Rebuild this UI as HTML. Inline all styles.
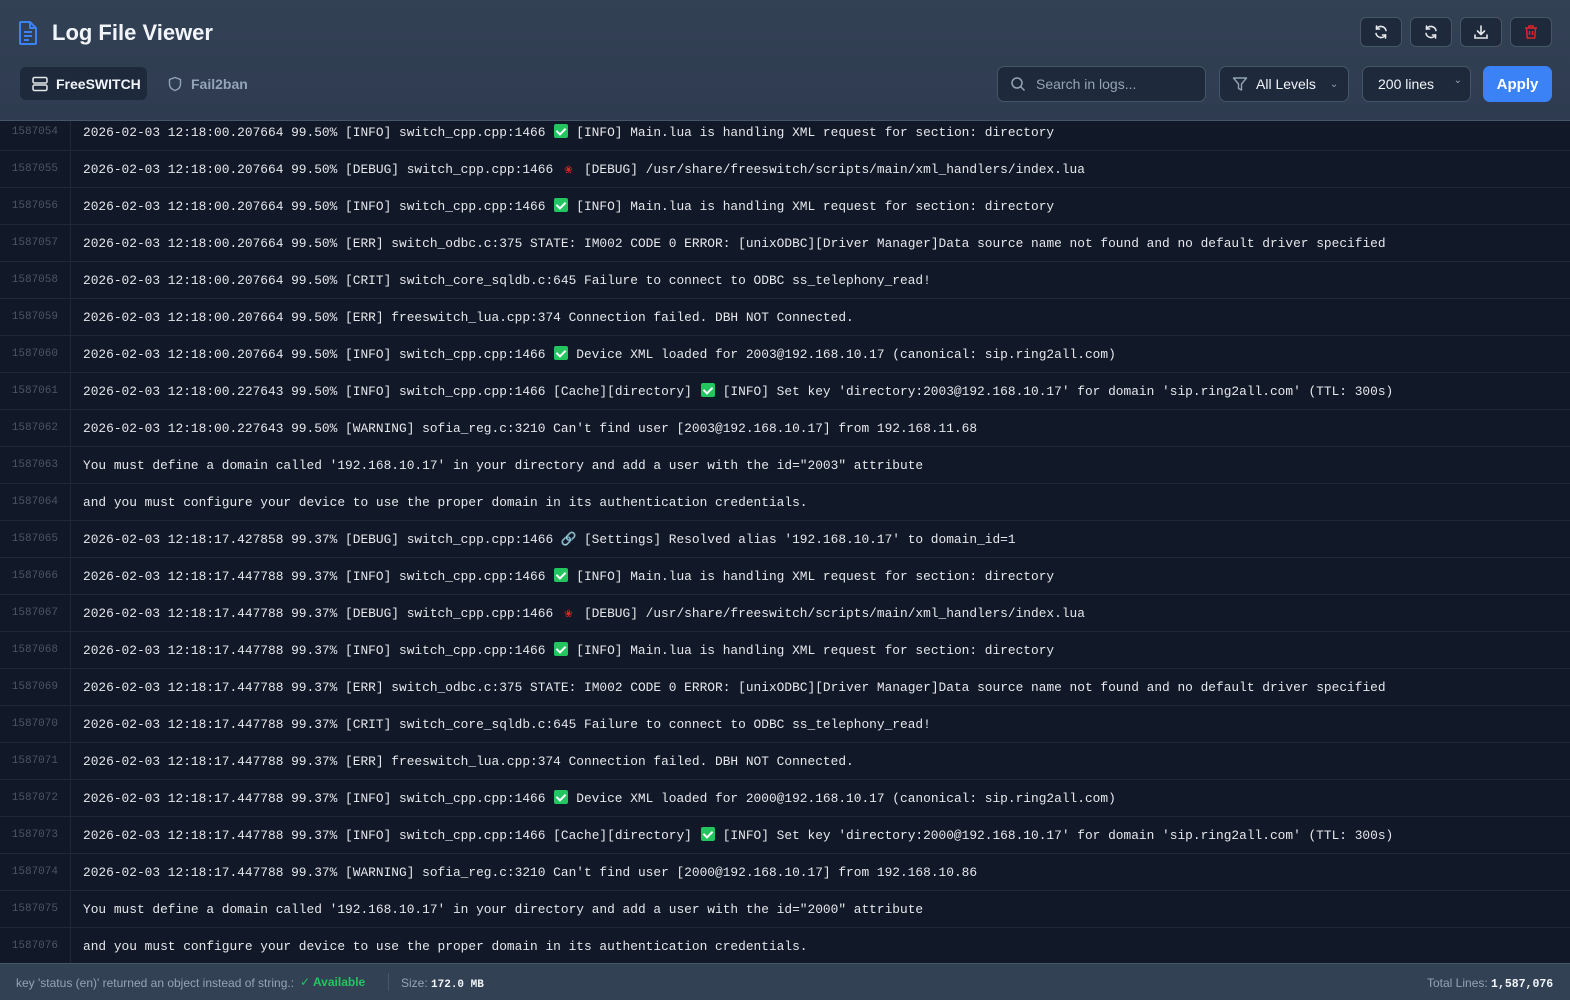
<!DOCTYPE html>
<html><head><meta charset="utf-8"><style>
*{box-sizing:border-box;margin:0;padding:0}
body{width:1570px;height:1000px;overflow:hidden;background:#111827;font-family:"Liberation Sans",sans-serif;color:#e5e7eb;position:relative}
.hdr{position:absolute;left:0;top:0;width:1570px;height:121px;background:linear-gradient(#334155,#2e3b50);border-bottom:1px solid #475569}
.title{position:absolute;left:52px;top:20px;font-size:22px;font-weight:bold;color:#f1f5f9}
.tab{position:absolute;top:67px;height:33px;border-radius:6px;font-size:14px;font-weight:bold;display:flex;align-items:center;gap:8px;padding-left:12px}
.ib{position:absolute;top:17px;width:42px;height:30px;border:1px solid #475569;border-radius:6px;background:#1e293b;display:flex;align-items:center;justify-content:center}
.ctl{position:absolute;top:66px;height:36px;border:1px solid #475569;border-radius:7px;background:#1e293b;display:flex;align-items:center;font-size:14px}
.logs{position:absolute;left:0;top:121px;width:1570px;height:842px;overflow:hidden}
.in{position:absolute;left:0;top:-7px;width:1570px}
.r{height:37px;border-bottom:1px solid #1f2937;display:flex;align-items:center;font-family:"Liberation Mono",monospace}
.n{width:71px;height:37px;border-right:1px solid #1f2937;font-size:11px;color:#4b5563;text-align:right;padding-right:12px;line-height:37px;flex:none}
.t{padding-left:12px;font-size:12.85px;color:#e5e7eb;white-space:pre}
.ok{display:inline-block;width:15.4px;height:14px;vertical-align:-2px;position:relative}
.ok::before{content:"";position:absolute;left:1px;top:0;width:14px;height:14px;background:#22c55e;border-radius:2px}
.ok::after{content:"";position:absolute;left:5px;top:2px;width:4px;height:7px;border:solid #fff;border-width:0 2px 2px 0;transform:rotate(45deg)}
.bug{display:inline-block;width:15.4px;text-align:center;color:#dc2626;font-size:13px}
.lk{display:inline-block;width:15.4px;text-align:center;color:#9ca3af}
.ftr{position:absolute;left:0;top:963px;width:1570px;height:37px;background:#334155;border-top:1px solid #475569;font-size:12px;color:#94a3b8}
.ftr span{position:absolute;top:12px}
</style></head><body>
<div class="hdr">
<svg style="position:absolute;left:18px;top:21px" width="20" height="24" viewBox="0 0 20 24" fill="none" stroke="#3b82f6" stroke-width="2" stroke-linejoin="round"><path d="M3 1h9l6 6v15a1 1 0 0 1-1 1H3a1 1 0 0 1-1-1V2a1 1 0 0 1 1-1z"/><path d="M12 1v6h6M6 11h8M6 15h8M6 19h5"/></svg>
<div class="title">Log File Viewer</div>
<div class="tab" style="left:20px;width:127px;background:#1e293b;color:#f1f5f9"><svg width="16" height="16" viewBox="0 0 16 16" fill="none" stroke="#e5e7eb" stroke-width="1.5"><rect x="1" y="1.5" width="14" height="5.5" rx="1.5"/><rect x="1" y="9" width="14" height="5.5" rx="1.5"/></svg>FreeSWITCH</div>
<div class="tab" style="left:155px;width:100px;color:#94a3b8"><svg width="16" height="16" viewBox="0 0 16 16" fill="none" stroke="#94a3b8" stroke-width="1.4"><path d="M8 1.5l5.5 2v4.5c0 3.5-2.5 5.5-5.5 6.5C5 13.5 2.5 11.5 2.5 8V3.5z"/></svg>Fail2ban</div>
<div class="ib" style="left:1360px"><svg width="16" height="16" viewBox="0 0 16 16" fill="none" stroke="#e5e7eb" stroke-width="1.6" stroke-linecap="round"><path d="M13 6.5A5.2 5.2 0 0 0 3.5 5M3 9.5A5.2 5.2 0 0 0 12.5 11"/><path d="M3.5 2v3h3M12.5 14v-3h-3"/></svg></div>
<div class="ib" style="left:1410px"><svg width="16" height="16" viewBox="0 0 16 16" fill="none" stroke="#e5e7eb" stroke-width="1.6" stroke-linecap="round"><path d="M13 6.5A5.2 5.2 0 0 0 3.5 5M3 9.5A5.2 5.2 0 0 0 12.5 11"/><path d="M3.5 2v3h3M12.5 14v-3h-3"/></svg></div>
<div class="ib" style="left:1460px"><svg width="16" height="16" viewBox="0 0 16 16" fill="none" stroke="#e5e7eb" stroke-width="1.6" stroke-linecap="round"><path d="M8 2v8M4.5 7L8 10.5 11.5 7M2 11v3h12v-3"/></svg></div>
<div class="ib" style="left:1510px"><svg width="16" height="16" viewBox="0 0 16 16" fill="none" stroke="#dc2626" stroke-width="1.5"><path d="M2 4h12M6 4V2h4v2M3.5 4l.8 10h7.4l.8-10M6.5 7v4M9.5 7v4"/></svg></div>
<div class="ctl" style="left:997px;width:209px;color:#94a3b8;padding-left:12px;gap:10px"><svg width="16" height="16" viewBox="0 0 16 16" fill="none" stroke="#94a3b8" stroke-width="1.5"><circle cx="7" cy="7" r="5"/><path d="M11 11l3.5 3.5"/></svg>Search in logs...</div>
<div class="ctl" style="left:1219px;width:130px;color:#f1f5f9;padding-left:12px;gap:8px"><svg width="16" height="16" viewBox="0 0 16 16" fill="none" stroke="#94a3b8" stroke-width="1.4" stroke-linejoin="round"><path d="M1.5 2h13L9.5 8v6l-3-1.5V8z"/></svg>All Levels<span style="color:#94a3b8;font-size:10px;margin-left:6px">&#8964;</span></div>
<div class="ctl" style="left:1362px;width:109px;color:#f1f5f9;padding-left:15px">200 lines<span style="color:#94a3b8;font-size:10px;position:absolute;right:8px;top:8px">&#8964;</span></div>
<div class="ctl" style="left:1483px;width:69px;background:#3b82f6;border-color:#3b82f6;color:#fff;font-weight:bold;font-size:15px;justify-content:center">Apply</div>
</div>
<div class="logs"><div class="in">
<div class="r"><div class="n">1587054</div><div class="t">2026-02-03 12:18:00.207664 99.50% [INFO] switch_cpp.cpp:1466 <span class="ok"></span> [INFO] Main.lua is handling XML request for section: directory</div></div>
<div class="r"><div class="n">1587055</div><div class="t">2026-02-03 12:18:00.207664 99.50% [DEBUG] switch_cpp.cpp:1466 <span class="bug">&#10048;</span> [DEBUG] /usr/share/freeswitch/scripts/main/xml_handlers/index.lua</div></div>
<div class="r"><div class="n">1587056</div><div class="t">2026-02-03 12:18:00.207664 99.50% [INFO] switch_cpp.cpp:1466 <span class="ok"></span> [INFO] Main.lua is handling XML request for section: directory</div></div>
<div class="r"><div class="n">1587057</div><div class="t">2026-02-03 12:18:00.207664 99.50% [ERR] switch_odbc.c:375 STATE: IM002 CODE 0 ERROR: [unixODBC][Driver Manager]Data source name not found and no default driver specified</div></div>
<div class="r"><div class="n">1587058</div><div class="t">2026-02-03 12:18:00.207664 99.50% [CRIT] switch_core_sqldb.c:645 Failure to connect to ODBC ss_telephony_read!</div></div>
<div class="r"><div class="n">1587059</div><div class="t">2026-02-03 12:18:00.207664 99.50% [ERR] freeswitch_lua.cpp:374 Connection failed. DBH NOT Connected.</div></div>
<div class="r"><div class="n">1587060</div><div class="t">2026-02-03 12:18:00.207664 99.50% [INFO] switch_cpp.cpp:1466 <span class="ok"></span> Device XML loaded for 2003@192.168.10.17 (canonical: sip.ring2all.com)</div></div>
<div class="r"><div class="n">1587061</div><div class="t">2026-02-03 12:18:00.227643 99.50% [INFO] switch_cpp.cpp:1466 [Cache][directory] <span class="ok"></span> [INFO] Set key 'directory:2003@192.168.10.17' for domain 'sip.ring2all.com' (TTL: 300s)</div></div>
<div class="r"><div class="n">1587062</div><div class="t">2026-02-03 12:18:00.227643 99.50% [WARNING] sofia_reg.c:3210 Can't find user [2003@192.168.10.17] from 192.168.11.68</div></div>
<div class="r"><div class="n">1587063</div><div class="t">You must define a domain called '192.168.10.17' in your directory and add a user with the id="2003" attribute</div></div>
<div class="r"><div class="n">1587064</div><div class="t">and you must configure your device to use the proper domain in its authentication credentials.</div></div>
<div class="r"><div class="n">1587065</div><div class="t">2026-02-03 12:18:17.427858 99.37% [DEBUG] switch_cpp.cpp:1466 <span class="lk">&#128279;</span> [Settings] Resolved alias '192.168.10.17' to domain_id=1</div></div>
<div class="r"><div class="n">1587066</div><div class="t">2026-02-03 12:18:17.447788 99.37% [INFO] switch_cpp.cpp:1466 <span class="ok"></span> [INFO] Main.lua is handling XML request for section: directory</div></div>
<div class="r"><div class="n">1587067</div><div class="t">2026-02-03 12:18:17.447788 99.37% [DEBUG] switch_cpp.cpp:1466 <span class="bug">&#10048;</span> [DEBUG] /usr/share/freeswitch/scripts/main/xml_handlers/index.lua</div></div>
<div class="r"><div class="n">1587068</div><div class="t">2026-02-03 12:18:17.447788 99.37% [INFO] switch_cpp.cpp:1466 <span class="ok"></span> [INFO] Main.lua is handling XML request for section: directory</div></div>
<div class="r"><div class="n">1587069</div><div class="t">2026-02-03 12:18:17.447788 99.37% [ERR] switch_odbc.c:375 STATE: IM002 CODE 0 ERROR: [unixODBC][Driver Manager]Data source name not found and no default driver specified</div></div>
<div class="r"><div class="n">1587070</div><div class="t">2026-02-03 12:18:17.447788 99.37% [CRIT] switch_core_sqldb.c:645 Failure to connect to ODBC ss_telephony_read!</div></div>
<div class="r"><div class="n">1587071</div><div class="t">2026-02-03 12:18:17.447788 99.37% [ERR] freeswitch_lua.cpp:374 Connection failed. DBH NOT Connected.</div></div>
<div class="r"><div class="n">1587072</div><div class="t">2026-02-03 12:18:17.447788 99.37% [INFO] switch_cpp.cpp:1466 <span class="ok"></span> Device XML loaded for 2000@192.168.10.17 (canonical: sip.ring2all.com)</div></div>
<div class="r"><div class="n">1587073</div><div class="t">2026-02-03 12:18:17.447788 99.37% [INFO] switch_cpp.cpp:1466 [Cache][directory] <span class="ok"></span> [INFO] Set key 'directory:2000@192.168.10.17' for domain 'sip.ring2all.com' (TTL: 300s)</div></div>
<div class="r"><div class="n">1587074</div><div class="t">2026-02-03 12:18:17.447788 99.37% [WARNING] sofia_reg.c:3210 Can't find user [2000@192.168.10.17] from 192.168.10.86</div></div>
<div class="r"><div class="n">1587075</div><div class="t">You must define a domain called '192.168.10.17' in your directory and add a user with the id="2000" attribute</div></div>
<div class="r"><div class="n">1587076</div><div class="t">and you must configure your device to use the proper domain in its authentication credentials.</div></div>
</div></div>
<div class="ftr">
<span style="left:16px">key 'status (en)' returned an object instead of string.:</span>
<span style="left:300px;color:#22c55e;font-weight:bold;top:11px"><span style="position:static;font-weight:normal">&#10003;</span> Available</span>
<span style="left:388px;top:9px;width:1px;height:18px;background:#475569"></span>
<span style="left:401px">Size: <b style="font-family:'Liberation Mono',monospace;color:#f1f5f9;font-size:11px">172.0 MB</b></span>
<span style="left:1427px">Total Lines: <b style="font-family:'Liberation Mono',monospace;color:#f1f5f9;font-size:11.5px">1,587,076</b></span>
</div>
</body></html>
